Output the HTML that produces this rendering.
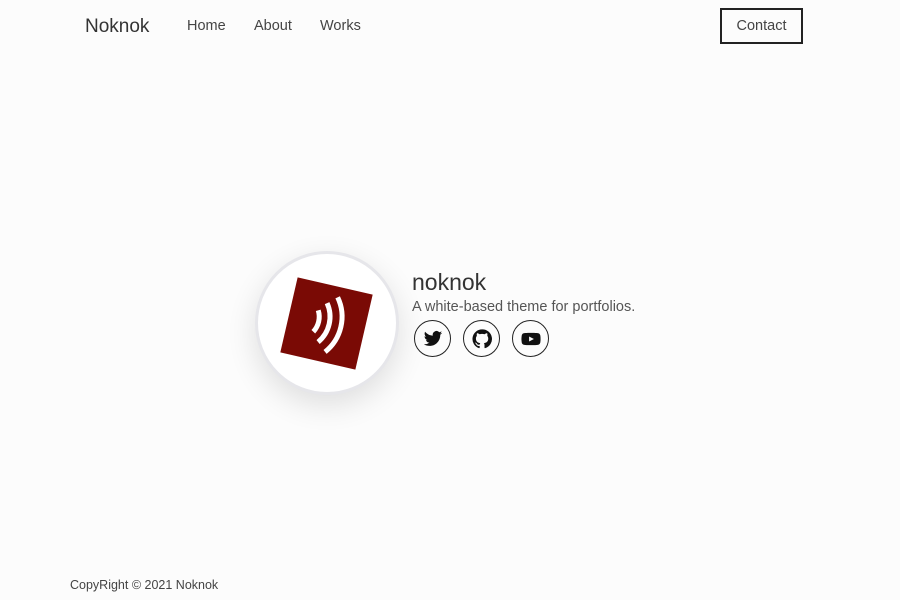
<!DOCTYPE html>
<html><head><meta charset="utf-8"><style>
body{margin:0;width:900px;height:600px;background:#fcfcfc;font-family:"Liberation Sans",sans-serif;color:#333;position:relative;overflow:hidden}
.a{position:absolute;white-space:nowrap}
.nav{font-size:14.5px;color:#444;top:18px}
.circle{position:absolute;left:255px;top:251px;width:138px;height:138px;border:3px solid #e6e6ea;border-radius:50%;background:#fff;box-shadow:0 10px 30px rgba(0,0,0,.12)}
.ic{position:absolute;top:320px;width:35px;height:35px;border:1px solid #222;border-radius:50%;display:flex;align-items:center;justify-content:center}
</style></head><body>
<div class="a" style="left:85px;top:16px;font-size:19px;color:#333">Noknok</div>
<div class="a nav" style="left:187px">Home</div>
<div class="a nav" style="left:254px">About</div>
<div class="a nav" style="left:320px">Works</div>
<div class="a" style="left:720px;top:8px;width:79px;height:32px;border:2px solid #222;font-size:14.5px;color:#444;display:flex;align-items:center;justify-content:center">Contact</div>

<div class="circle"></div>
<svg class="a" style="left:276px;top:273px" width="101" height="101" viewBox="-50.5 -50.5 101 101">
<g transform="rotate(13)">
<rect x="-38.5" y="-38.5" width="77" height="77" fill="#7a0a05"/>
<g fill="none" stroke="#fff" stroke-width="5">
<path d="M-11 -11 A22 22 0 0 1 -11 11"/>
<path d="M-4 -20 A33 33 0 0 1 -4 20"/>
<path d="M5 -28 A45 45 0 0 1 5 28"/>
</g></g></svg>

<div class="a" style="left:412px;top:269px;font-size:23px;color:#333">noknok</div>
<div class="a" style="left:412px;top:299px;font-size:14.5px;color:#555">A white-based theme for portfolios.</div>
<div class="ic" style="left:414px"><svg width="20" height="20" viewBox="0 0 24 24"><path fill="#111" d="M23 4.6c-.8.4-1.7.6-2.6.7.9-.6 1.6-1.4 2-2.5-.9.5-1.9.9-2.9 1.1a4.5 4.5 0 0 0-7.7 4.1C8 7.8 4.7 6 2.5 3.3a4.5 4.5 0 0 0 1.4 6 4.5 4.5 0 0 1-2-.6v.1c0 2.2 1.5 4 3.6 4.4-.7.2-1.4.2-2 .1.6 1.8 2.2 3.1 4.2 3.1A9 9 0 0 1 1 18.3 12.8 12.8 0 0 0 7.9 20.3c8.3 0 12.8-6.9 12.8-12.8v-.6c.9-.6 1.7-1.4 2.3-2.3z"/></svg></div>
<div class="ic" style="left:463px"><svg width="20" height="20" viewBox="0 0 24 24"><path fill="#111" d="M12 .5a11.5 11.5 0 0 0-3.6 22.4c.6.1.8-.3.8-.6v-2c-3.2.7-3.9-1.5-3.9-1.5-.5-1.3-1.3-1.7-1.3-1.7-1-.7.1-.7.1-.7 1.2.1 1.8 1.2 1.8 1.2 1 1.8 2.7 1.3 3.4 1 .1-.8.4-1.3.7-1.6-2.6-.3-5.3-1.3-5.3-5.7 0-1.3.5-2.3 1.2-3.1-.1-.3-.5-1.5.1-3.1 0 0 1-.3 3.2 1.2a11 11 0 0 1 5.8 0c2.2-1.5 3.2-1.2 3.2-1.2.6 1.6.2 2.8.1 3.1.7.8 1.2 1.8 1.2 3.1 0 4.4-2.7 5.4-5.3 5.7.4.4.8 1.1.8 2.2v3.2c0 .3.2.7.8.6A11.5 11.5 0 0 0 12 .5z"/></svg></div>
<div class="ic" style="left:512px"><svg width="20" height="20" viewBox="0 0 24 24"><path fill="#111" d="M23 7.2a3 3 0 0 0-2.1-2.1C19 4.6 12 4.6 12 4.6s-7 0-8.9.5A3 3 0 0 0 1 7.2 31 31 0 0 0 .5 12 31 31 0 0 0 1 16.8a3 3 0 0 0 2.1 2.1c1.9.5 8.9.5 8.9.5s7 0 8.9-.5a3 3 0 0 0 2.1-2.1c.5-1.6.5-4.8.5-4.8s0-3.2-.5-4.8zM9.7 15V9l5.8 3-5.8 3z"/></svg></div>

<div class="a" style="left:70px;top:578px;font-size:12.5px;color:#444">CopyRight © 2021 Noknok</div>
</body></html>
